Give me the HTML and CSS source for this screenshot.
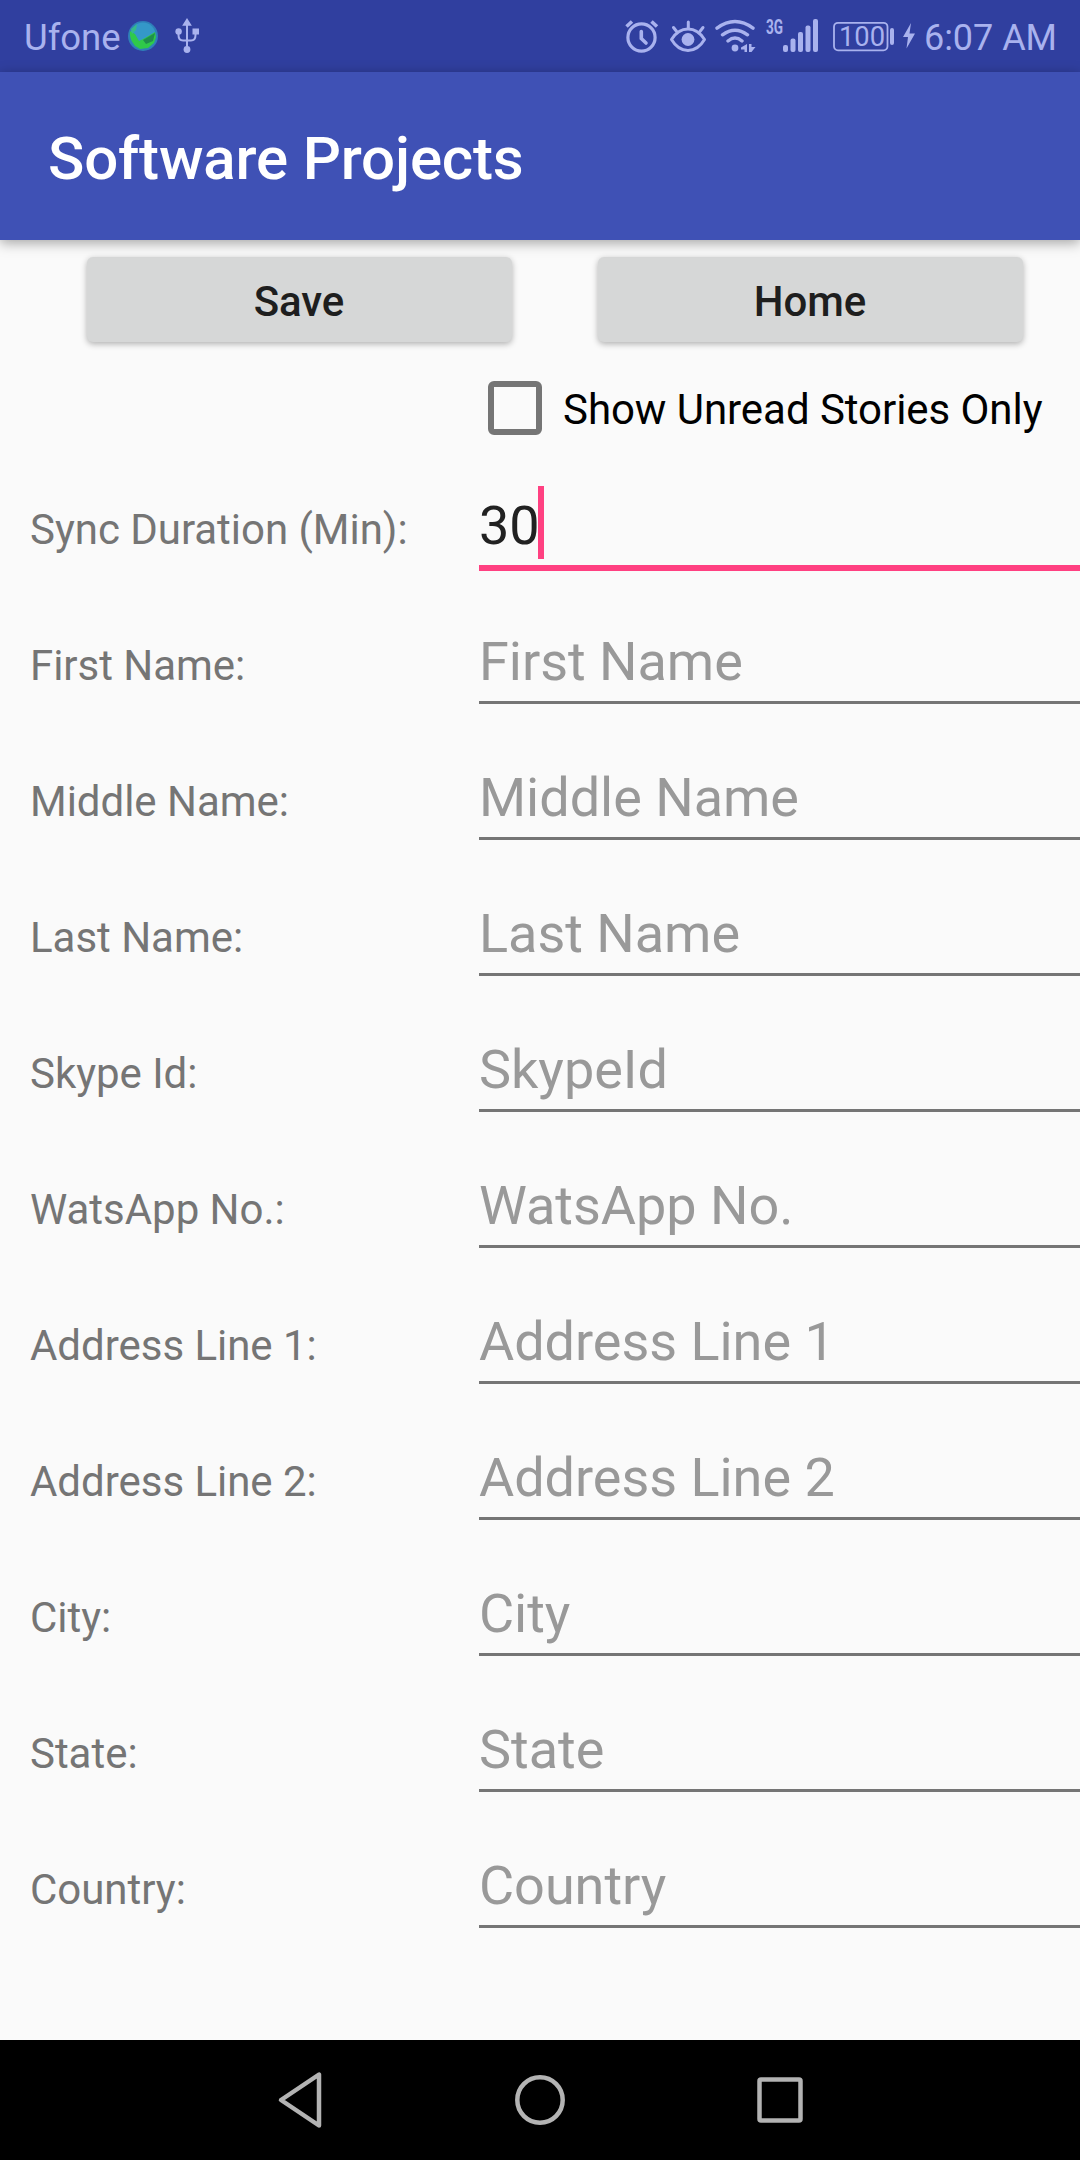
FILE: index.html
```html
<!DOCTYPE html>
<html lang="en">
<head>
<meta charset="utf-8">
<title>Software Projects</title>
<link rel="stylesheet" href="styles.css">
</head>
<body>
<div class="screen">
  <div class="status">
    <span class="carrier">Ufone</span>
    <svg class="globe" width="30" height="30" viewBox="0 0 30 30">
      <circle cx="15" cy="15" r="15" fill="#2f7fb8"/>
      <circle cx="15" cy="14" r="12.5" fill="#3498c8"/>
      <path d="M2 10L7 13L11 20L17 17L27 11L28 16L26 22L20 27L12 28L7 25Q1 18 2 10Z" fill="#2fc94a"/>
      <path d="M3 8L9 3L8 9L4 13Z" fill="#35b98a"/>
      <path d="M15 19L27 12L25 20L18 23Z" fill="#1f8f4c"/>
    </svg>
    <svg class="usb" width="24" height="36" viewBox="0 0 24 36" fill="#a9b2ee" stroke="#a9b2ee">
      <path d="M12 6V31M3.5 14V17Q3.5 22.500 8 22.500H16Q20.500 22.500 20.500 17V14" fill="none" stroke-width="2"/>
      <path d="M12 1.500L15.500 7H8.500Z" stroke-width="1.500"/>
      <circle cx="3.600" cy="13.500" r="3.200" stroke="none"/>
      <rect x="17.500" y="10.500" width="6.500" height="6" stroke="none"/>
      <circle cx="12" cy="31.500" r="3.400" stroke="none"/>
    </svg>
    <div class="status-icons">
      <svg width="275" height="40" viewBox="620 16 275 40" fill="none" stroke="#a9b2ee" stroke-linecap="round">
        <circle cx="641.500" cy="37.500" r="13.600" stroke-width="3.200"/>
        <path d="M641.300 31.500V38.500L646 43" stroke-width="3.600"/>
        <path d="M626.500 26.500L632 21.500M657 26.500L651.500 21.500" stroke-width="3.600" stroke-linecap="butt"/>
        <path d="M671.500 39.500Q678 29 688 29T704.500 39.500Q698 50.500 688 50.500T671.500 39.500Z" stroke-width="3" stroke-linejoin="round"/>
        <circle cx="688" cy="39.500" r="6.400" fill="#a9b2ee" stroke="none"/>
        <path d="M688.300 22V28M673.500 27.500L677 32M703 27.500L699.500 32" stroke-width="3"/>
        <path d="M717 28.200Q735 15 753 28.200M722.500 34.800Q735 25.500 747.500 34.800M728 41Q735 35.200 742 41" stroke-width="3.400"/>
        <g fill="#a9b2ee" stroke="none">
          <circle cx="735" cy="48" r="3.400"/>
          <path d="M747 44V52H744.500V49.500H741V47.500ZM749 44V52H751.500L755.500 47H751.500V44Z"/>
          <rect x="783" y="45" width="5" height="7" rx="2"/>
          <rect x="790.500" y="38.500" width="5" height="13.500" rx="2"/>
          <rect x="798" y="32" width="5" height="20" rx="2"/>
          <rect x="805.500" y="25.500" width="5" height="26.500" rx="2"/>
          <rect x="813" y="19" width="5" height="33" rx="2"/>
          <rect x="890" y="28" width="4" height="17" rx="2"/>
          <text class="net" x="766" y="33.500" textLength="17" lengthAdjust="spacingAndGlyphs">3G</text>
          <text class="level" x="839" y="45.700" textLength="46" lengthAdjust="spacingAndGlyphs">100</text>
        </g>
        <rect x="834" y="22.800" width="53.500" height="27.500" rx="4" stroke-width="1.800"/>
      </svg>
      <svg class="bolt" width="14" height="28" viewBox="0 0 14 28" fill="#a9b2ee"><path d="M9 1L1 15H6L4.500 26.500L13 11.500H7.500Z"/></svg>
      <span class="clock">6:07 AM</span>
    </div>
  </div>
  <header class="appbar"><h1 class="title">Software Projects</h1></header>
  <main class="content">
    <div class="buttons">
      <button class="btn">Save</button>
      <button class="btn">Home</button>
    </div>
    <div class="check"><span class="box"></span><span class="check-text">Show Unread Stories Only</span></div>
    <div class="form">
      <div class="row"><span class="label">Sync Duration (Min):</span><div class="field focused"><span>30</span><i class="caret"></i></div></div>
      <div class="row"><span class="label">First Name:</span><div class="field">First Name</div></div>
      <div class="row"><span class="label">Middle Name:</span><div class="field">Middle Name</div></div>
      <div class="row"><span class="label">Last Name:</span><div class="field">Last Name</div></div>
      <div class="row"><span class="label">Skype Id:</span><div class="field">SkypeId</div></div>
      <div class="row"><span class="label">WatsApp No.:</span><div class="field">WatsApp No.</div></div>
      <div class="row"><span class="label">Address Line 1:</span><div class="field">Address Line 1</div></div>
      <div class="row"><span class="label">Address Line 2:</span><div class="field">Address Line 2</div></div>
      <div class="row"><span class="label">City:</span><div class="field">City</div></div>
      <div class="row"><span class="label">State:</span><div class="field">State</div></div>
      <div class="row"><span class="label">Country:</span><div class="field">Country</div></div>
    </div>
  </main>
  <nav class="navbar">
    <svg width="52" height="60" viewBox="0 0 52 60"><path d="M45 4.500V55.500L7 30Z"/></svg>
    <svg width="52" height="60" viewBox="0 0 52 60"><circle cx="26" cy="30" r="22.700"/></svg>
    <svg width="52" height="60" viewBox="0 0 52 60"><rect x="5.500" y="9.500" width="41" height="41" rx="1.500"/></svg>
  </nav>
</div>
</body>
</html>
```
FILE: styles.css
```css
body {
  margin: 0;
  background: #fafafa;
  font-family: Roboto, "Liberation Sans", sans-serif;
  font-size: 42px;
  letter-spacing: -.03px;
}

.screen {
  display: flex;
  flex-direction: column;
  width: 1080px;
  height: 2160px;
  overflow: hidden;
}

.status {
  display: flex;
  align-items: center;
  box-sizing: border-box;
  height: 72px;
  padding: 0 23px 0 24px;
  background: #303f9f;
  color: #a9b2ee;
  font-size: 36px;
  line-height: 70px;
}

.carrier { width: 104px; font-size: 36.500px; white-space: nowrap; }
.carrier, .clock { padding-top: 4px; }
.usb { margin-left: 17px; }

.status-icons {
  display: flex;
  align-items: center;
  margin-left: auto;
}

.bolt { margin-left: 7px; }
.clock { margin-left: 8px; white-space: nowrap; }
.net { font-size: 20px; font-weight: 700; }
.level { font-size: 28px; }

.appbar {
  position: relative;
  height: 168px;
  background: #3f51b5;
  box-shadow: 0 3px 12px rgba(0, 0, 0, .35);
}

.title {
  margin: 0;
  padding: 3px 48px 0;
  color: #fff;
  font-size: 60px;
  font-weight: 500;
  line-height: 168px;
  letter-spacing: -.16px;
}

.content { flex: 1; }

.buttons {
  display: flex;
  gap: 86px;
  padding: 17px 57px 0 87px;
}

.btn {
  flex: 1;
  height: 85px;
  padding: 5px 1px 0 0;
  border: 0;
  border-radius: 6px;
  background: #d6d7d7;
  box-shadow: 0 2px 6px rgba(0, 0, 0, .3);
  color: #1e1e1e;
  font: 500 42px/80px Roboto, "Liberation Sans", sans-serif;
  letter-spacing: -.05px;
}

.check {
  display: flex;
  align-items: center;
  gap: 21px;
  height: 54px;
  margin: 39px 0 41px 488px;
  color: #000;
  line-height: 56px;
  white-space: nowrap;
}

.check-text { padding-top: 3px; letter-spacing: -.05px; }

.box {
  box-sizing: border-box;
  width: 54px;
  height: 54px;
  border: 6px solid #757575;
  border-radius: 6px;
}

.row {
  display: grid;
  grid-template-columns: 449px 1fr;
  align-items: baseline;
  height: 136px;
  padding-left: 30px;
}

.label { color: #757575; }

.field {
  padding-top: 10px;
  border-bottom: 3px solid #757575;
  color: #999;
  font-size: 54px;
  line-height: 79px;
}

.focused {
  display: flex;
  border-bottom: 6px solid #ff4081;
  color: #212121;
}

.caret {
  width: 6px;
  height: 73px;
  margin-left: -2px;
  background: #ff4081;
}

.navbar {
  display: flex;
  justify-content: center;
  align-items: center;
  gap: 188px;
  height: 120px;
  background: #000;
}

.navbar svg {
  fill: none;
  stroke: #b3b3b3;
  stroke-width: 4.500;
  stroke-linejoin: round;
}
```
